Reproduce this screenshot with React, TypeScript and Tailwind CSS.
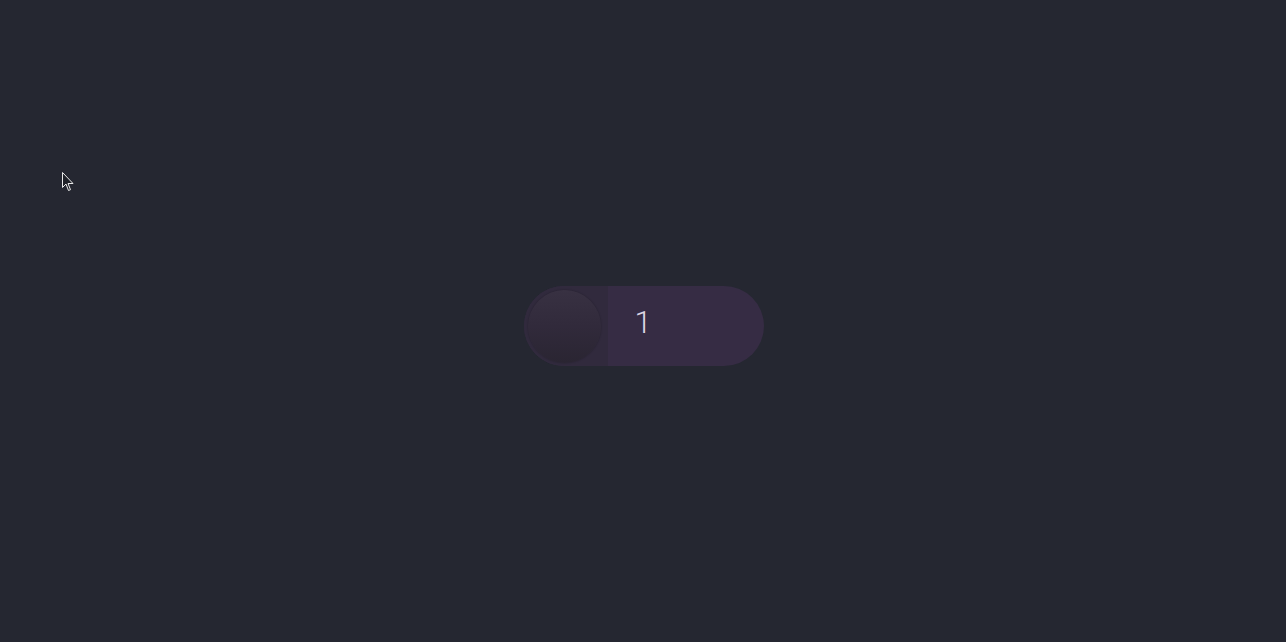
import React from "react";

export default function App() {
  return (
    <div className="relative w-full h-[642px] bg-[#252731] overflow-hidden" style={{ fontFamily: "'Liberation Sans', Arial, sans-serif" }}>
      <svg className="absolute left-[62px] top-[172px]" width="13" height="20" viewBox="0 0 13 20">
        <path d="M0.5 0.5 L0.5 15.5 L4 12 L6.5 18.5 L8.5 17.7 L6 11.5 L11 11.5 Z" fill="#1f2128" stroke="#e8e8e8" strokeWidth="1" />
      </svg>
      <div className="flex h-full items-center justify-center pl-[1px]">
        <div className="flex h-[80px] w-[240px] items-center rounded-full bg-[#362c44] overflow-hidden mt-[10px]">
          <div className="flex h-full w-[84px] items-center justify-start bg-[#312a3d] pl-[4px]">
            <div className="h-[73px] w-[73px] rounded-full bg-gradient-to-b from-[#383142] via-[#312a3b] to-[#2a2532] shadow-[0_0_2px_rgba(0,0,0,0.3)]" />
          </div>
          <div className="flex h-full flex-1 items-center pl-[27px] pb-[8px]">
            <span className="text-[31px] leading-none font-light text-[#ddd5e3]" style={{ fontFamily: "Roboto, 'Liberation Sans', sans-serif" }}>1</span>
          </div>
        </div>
      </div>
    </div>
  );
}
